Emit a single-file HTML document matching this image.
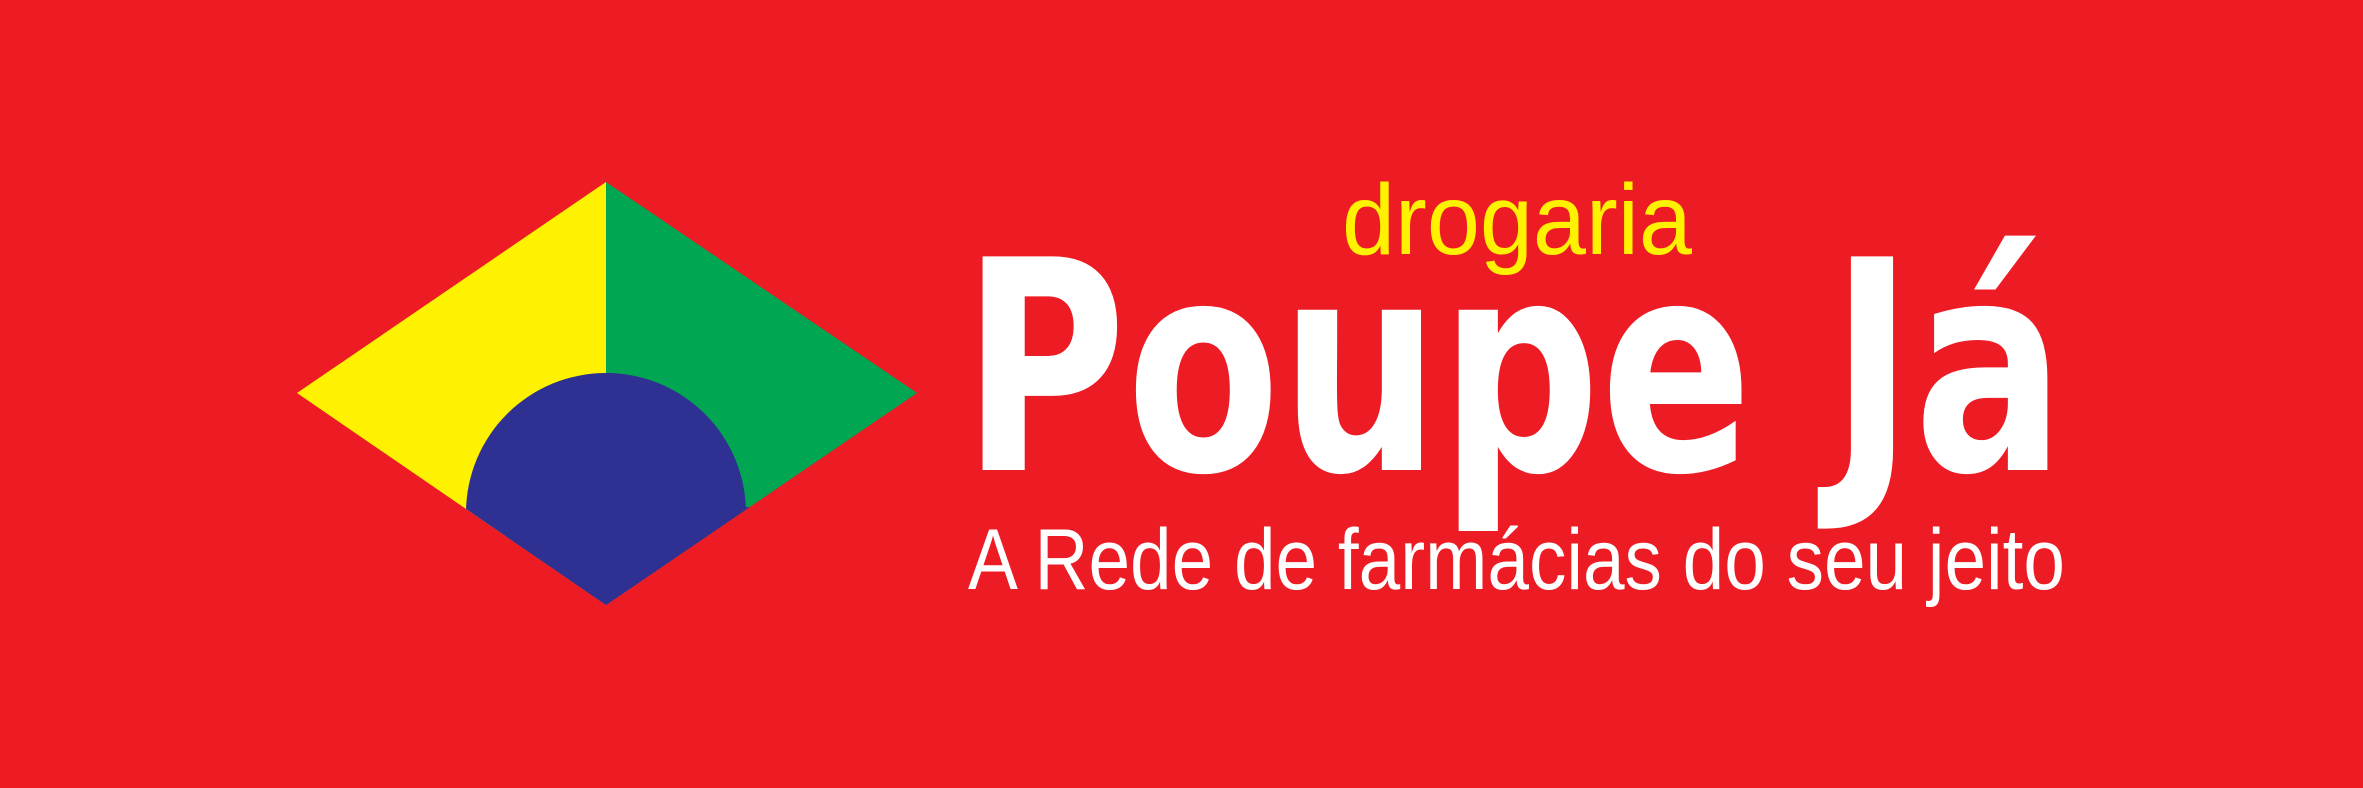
<!DOCTYPE html>
<html><head><meta charset="utf-8"><style>html,body{margin:0;padding:0;background:#ED1C24;}svg{display:block}</style></head>
<body>
<svg width="2363" height="788" viewBox="0 0 2363 788" xmlns="http://www.w3.org/2000/svg">
<rect width="2363" height="788" fill="#ED1C24"/>
<defs><clipPath id="d"><polygon points="297,393 606,182 917,393 606,605"/></clipPath></defs>
<g clip-path="url(#d)">
<rect x="290" y="175" width="316" height="440" fill="#FFF200"/>
<rect x="606" y="175" width="320" height="440" fill="#00A651"/>
<circle cx="606" cy="513" r="140" fill="#2E3192"/>
<polygon points="466,507 750,507 606,610" fill="#2E3192"/>
</g>
<text x="1342" y="254" font-family="Liberation Sans, sans-serif" font-size="100" fill="#FFF200" textLength="350" lengthAdjust="spacingAndGlyphs">drogaria</text>
<text x="962" y="470" font-family="DejaVu Sans, sans-serif" font-weight="bold" font-size="293" fill="#fff" textLength="1103" lengthAdjust="spacingAndGlyphs">Poupe Já</text>
<text x="968" y="589" font-family="Liberation Sans, sans-serif" font-size="86" fill="#fff" textLength="1097" lengthAdjust="spacingAndGlyphs">A Rede de farmácias do seu jeito</text>
</svg>
</body></html>
